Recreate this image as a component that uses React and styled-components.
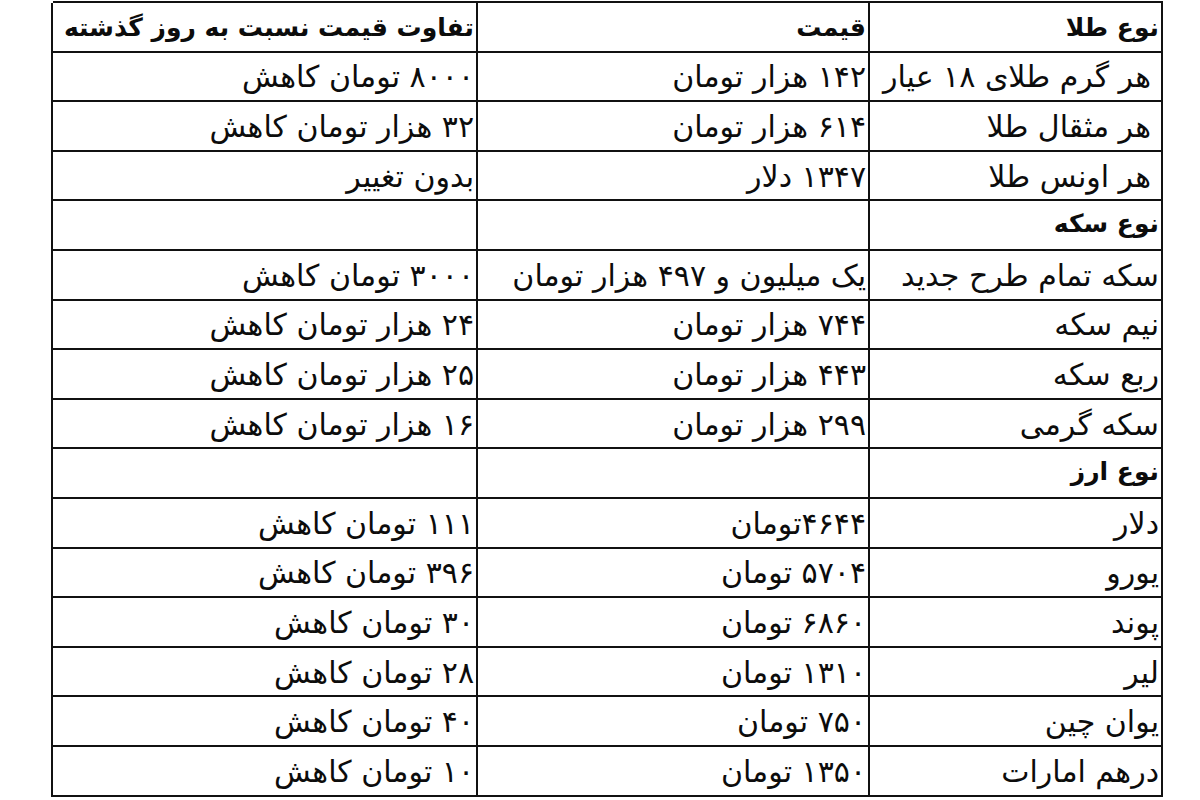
import React from "react";
import styled, { createGlobalStyle } from "styled-components";

const Global = createGlobalStyle`
  html, body { margin: 0; padding: 0; background: #fff; }
  body { font-family: "DejaVu Sans", "Noto Sans", sans-serif; }
`;

const Page = styled.div`
  width: 1200px;
  height: 800px;
  padding: 1px 0 0 53px;
  box-sizing: border-box;
`;

const Grid = styled.div`
  direction: rtl;
  display: grid;
  grid-template-columns: 293px 392px 425px;
  grid-auto-rows: 49.6px;
  width: 1110px;
  box-sizing: border-box;
  border-top: 2px solid #111;
  border-right: 2px solid #111;
  color: #0c0c0c;
`;

const Cell = styled.div`
  box-sizing: border-box;
  border-bottom: 2px solid #111;
  border-left: 2px solid #111;
  display: flex;
  align-items: ${(p) => (p.$top ? "flex-start" : "center")};
  justify-content: flex-start;
  padding: ${(p) => (p.$top ? "8px" : "2px")} ${(p) => (p.$indent ? "10px" : "2px")} 0 0;
  font-size: ${(p) => (p.$bold ? "25px" : "30px")};
  font-weight: ${(p) => (p.$bold ? 700 : 400)};
  white-space: nowrap;
  overflow: hidden;
  line-height: 1.2;
`;

const rows = [
  { h: true, c: ["نوع طلا", "قیمت", "تفاوت قیمت نسبت به روز گذشته"] },
  { c: ["هر گرم طلای ۱۸ عیار", "۱۴۲ هزار تومان", "۸۰۰۰ تومان کاهش"], i: true },
  { c: ["هر مثقال طلا", "۶۱۴ هزار تومان", "۳۲ هزار تومان کاهش"], i: true },
  { c: ["هر اونس طلا", "۱۳۴۷ دلار", "بدون تغییر"], i: true },
  { s: true, c: ["نوع سکه", "", ""] },
  { c: ["سکه تمام طرح جدید", "یک میلیون و ۴۹۷ هزار تومان", "۳۰۰۰ تومان کاهش"] },
  { c: ["نیم سکه", "۷۴۴ هزار تومان", "۲۴ هزار تومان کاهش"] },
  { c: ["ربع سکه", "۴۴۳ هزار تومان", "۲۵ هزار تومان کاهش"] },
  { c: ["سکه گرمی", "۲۹۹ هزار تومان", "۱۶ هزار تومان کاهش"] },
  { s: true, c: ["نوع ارز", "", ""] },
  { c: ["دلار", "۴۶۴۴تومان", "۱۱۱ تومان کاهش"] },
  { c: ["یورو", "۵۷۰۴ تومان", "۳۹۶ تومان کاهش"] },
  { c: ["پوند", "۶۸۶۰ تومان", "۳۰ تومان کاهش"] },
  { c: ["لیر", "۱۳۱۰ تومان", "۲۸ تومان کاهش"] },
  { c: ["یوان چین", "۷۵۰ تومان", "۴۰ تومان کاهش"] },
  { c: ["درهم امارات", "۱۳۵۰ تومان", "۱۰ تومان کاهش"] },
];

export default function App() {
  return (
    <>
      <Global />
      <Page>
        <Grid>
          {rows.map((r, ri) =>
            r.c.map((t, ci) => (
              <Cell
                key={`${ri}-${ci}`}
                $bold={r.h || r.s}
                $top={r.s}
                $indent={ci === 0 && r.i}
              >
                {t}
              </Cell>
            ))
          )}
        </Grid>
      </Page>
    </>
  );
}
